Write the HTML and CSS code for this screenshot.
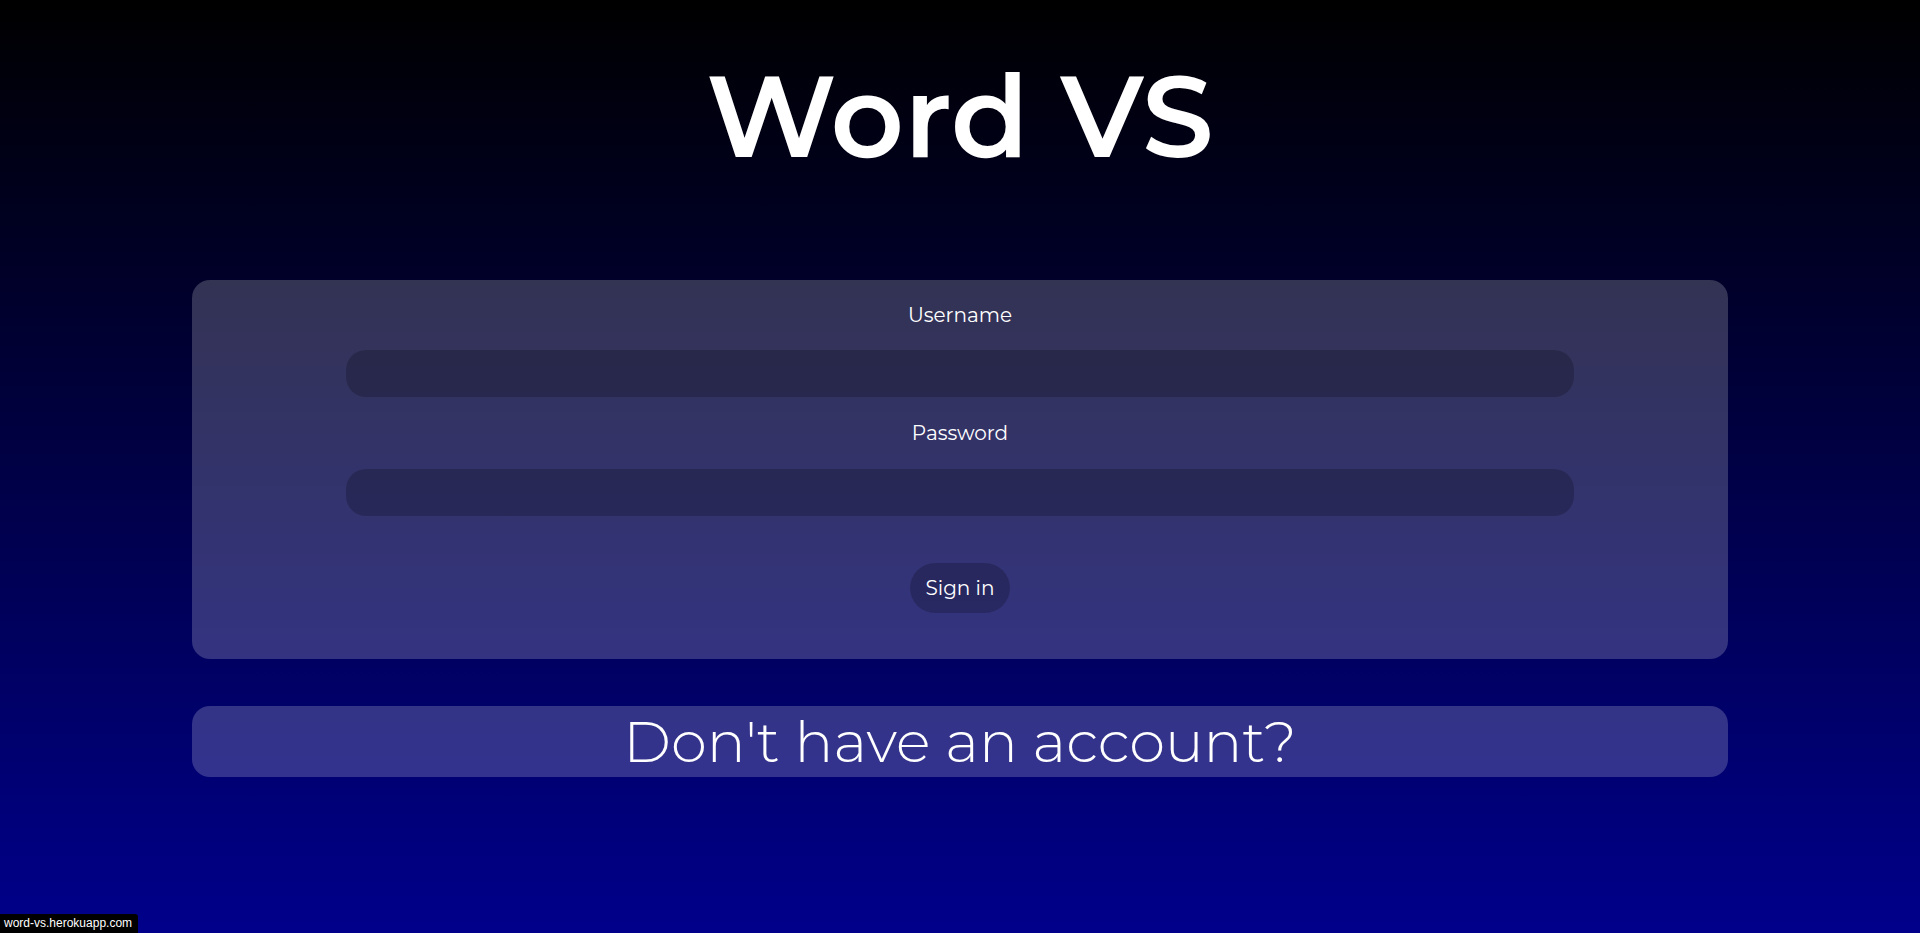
FILE: index.html
```html
<!DOCTYPE html>
<html lang="en">
<head>
<meta charset="utf-8">
<title>Word VS</title>
<link rel="stylesheet" href="styles.css">
</head>
<body>
<main class="page">
  <h1 class="title">Word VS</h1>
  <form class="card login">
    <label class="label label-first" for="username">Username</label>
    <input class="field" id="username" type="text">
    <label class="label label-second" for="password">Password</label>
    <input class="field" id="password" type="password">
    <button class="btn" type="button">Sign in</button>
  </form>
  <div class="card signup">Don't have an account?</div>
</main>
<div class="status">word-vs.herokuapp.com</div>
</body>
</html>
```
FILE: styles.css
```css
html, body {
  margin: 0;
  padding: 0;
  height: 100%;
}
body {
  background: linear-gradient(to bottom, #000000, #00008b);
  font-family: "Montserrat", "Inter", "Noto Sans", sans-serif;
  color: #ffffff;
  overflow: hidden;
}
.page {
  display: flex;
  flex-direction: column;
  align-items: center;
  padding-top: 60px;
}
.title {
  margin: 0;
  font-size: 114px;
  line-height: 114px;
  font-weight: 600;
  text-align: center;
}
.card {
  width: 80%;
  box-sizing: border-box;
  background: rgba(255, 255, 255, 0.2);
  border-radius: 18px;
}
.login {
  margin-top: 106px;
  display: flex;
  flex-direction: column;
  align-items: center;
  padding: 23px 0 46px;
}
.label {
  font-size: 20px;
  line-height: 24px;
}
.label-first {
  margin-bottom: 23px;
}
.label-second {
  margin-top: 24px;
  margin-bottom: 24px;
}
.field {
  width: 80%;
  height: 47px;
  box-sizing: border-box;
  border: none;
  border-radius: 20px;
  background: rgba(0, 0, 0, 0.2);
  color: #fff;
  outline: none;
  padding: 0 20px;
  font: inherit;
}
.btn {
  margin-top: 47px;
  width: 100px;
  height: 50px;
  border: none;
  border-radius: 25px;
  background: rgba(0, 0, 0, 0.2);
  color: #fff;
  font-family: inherit;
  font-size: 20px;
  cursor: pointer;
}
.signup {
  margin-top: 47px;
  height: 71px;
  display: flex;
  align-items: center;
  justify-content: center;
  font-size: 57.7px;
  font-weight: 300;
  line-height: 71px;
}
.status {
  position: fixed;
  left: 0;
  bottom: 0;
  background: #000;
  color: #fff;
  font-family: "Liberation Sans", sans-serif;
  font-size: 12px;
  line-height: 19px;
  padding: 0 6px 0 4px;
  border-top-right-radius: 3px;
}
```
